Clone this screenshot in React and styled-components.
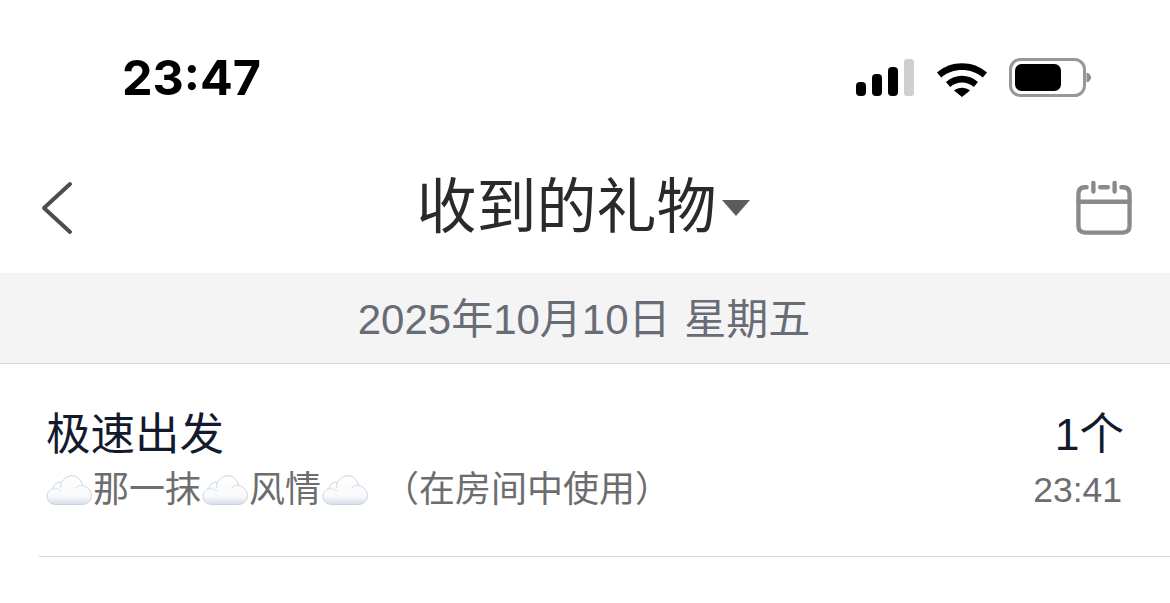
import React from 'react';
import styled, { createGlobalStyle } from 'styled-components';

const FONT = '"Liberation Sans", "Noto Sans CJK SC", sans-serif';

const GlobalStyle = createGlobalStyle`
  html, body {
    margin: 0;
    padding: 0;
    background: #fff;
    overflow: hidden;
  }
  body {
    font-family: ${FONT};
  }
`;

const Cloud = () => (
  <CloudIcon viewBox="0 0 46 30">
    <defs>
      <linearGradient id="cloudFill" x1="0" y1="0" x2="0" y2="1">
        <stop offset="0" stopColor="#ffffff" />
        <stop offset="0.72" stopColor="#f8f9fb" />
        <stop offset="1" stopColor="#d5deeb" />
      </linearGradient>
    </defs>
    <path
      d="M10 29.500C4.500 29.500 1 26 1 21.500 1 17.500 3.500 14.500 7 13.500 7.500 9 11.500 6.500 15.500 7.500 18 3 22 .8 26 .8c5.500 0 9.500 4.200 10.500 9.700 5 1 9 5 9 10 0 5-4 9-9.500 9z"
      fill="url(#cloudFill)"
      stroke="#ccd3de"
      strokeWidth="1"
    />
    <path d="M7 14c3-1 6-.2 8 2M15.500 7.500c-1 2-1.200 3.500-1 5.500M36.500 10.500c-2.500-.3-5 .6-6.500 2.500" fill="none" stroke="#dde2ea" strokeWidth="1.200" />
  </CloudIcon>
);

export default function App() {
  return (
    <Page>
      <GlobalStyle />
      <StatusBar>
        <Clock>23:47</Clock>
        <StatusIcons>
          <svg width="58" height="38" viewBox="0 0 58 38">
            <rect x="0" y="23" width="10" height="14" rx="4" fill="#000" />
            <rect x="16" y="15" width="10" height="22" rx="4" fill="#000" />
            <rect x="32" y="8" width="10" height="29" rx="4" fill="#000" />
            <rect x="48" y="0" width="10" height="37" rx="3" fill="#cfcfcf" />
          </svg>
          <svg width="52" height="38" viewBox="0 0 52 38">
            <path d="M1 13.500C14.500 1 37.500 1 51 13.500l-4.200 5C35.500 8.500 16.500 8.500 5.200 18.500z" fill="#000" />
            <path d="M10 23C19.500 14.500 32.500 14.500 42 23l-4.200 5c-6.500-6-17.100-6-23.600 0z" fill="#000" />
            <path d="M18 31.500c4.800-3.700 11.200-3.700 16 0L26 38z" fill="#000" />
          </svg>
          <svg width="82" height="40" viewBox="0 0 82 40">
            <rect x="1.500" y="1.500" width="74" height="36" rx="10" fill="none" stroke="#979797" strokeWidth="3" />
            <rect x="6" y="6" width="46" height="27" rx="6.500" fill="#000" />
            <path d="M77.500 14.500c3 .8 4.500 3 4.500 5s-1.500 4.200-4.500 5z" fill="#8e8e8e" />
          </svg>
        </StatusIcons>
      </StatusBar>

      <NavBar>
        <svg width="32" height="54" viewBox="0 0 32 54">
          <path d="M29 3L3 27l26 24" fill="none" stroke="#4d4d4d" strokeWidth="4" strokeLinecap="round" strokeLinejoin="round" />
        </svg>
        <TitleWrap>
          <Title>收到的礼物</Title>
          <svg width="28" height="16" viewBox="0 0 28 16">
            <path d="M0 0h28L14 16z" fill="#5c5c5c" />
          </svg>
        </TitleWrap>
        <svg width="58" height="54" viewBox="0 0 58 56">
          <g fill="none" stroke="#8a8a8a" strokeWidth="4.500" strokeLinecap="round">
            <path d="M11 6.500H9.500C5 6.500 2.500 9 2.500 13.500v33c0 4.500 2.500 7 7 7h39c4.500 0 7-2.500 7-7v-33c0-4.500-2.500-7-7-7H47" />
            <path d="M2.500 21.500h53" />
            <path d="M18 2v9M40 2v9M25 6.500h8" />
          </g>
        </svg>
      </NavBar>

      <DateBar>2025年10月10日 星期五</DateBar>

      <Row>
        <RowLeft>
          <GiftName>极速出发</GiftName>
          <Sender>
            <Cloud />
            <span>那一抹</span>
            <Cloud />
            <span>风情</span>
            <Cloud />
            <Usage>（在房间中使用）</Usage>
          </Sender>
        </RowLeft>
        <RowRight>
          <Count>1个</Count>
          <Time>23:41</Time>
        </RowRight>
      </Row>
    </Page>
  );
}

const Page = styled.div`
  width: 1170px;
  height: 603px;
  background: #fff;
  overflow: hidden;
`;

const StatusBar = styled.div`
  height: 154px;
  box-sizing: border-box;
  padding: 2px 79px 0 122px;
  display: flex;
  justify-content: space-between;
  align-items: center;
`;

const Clock = styled.div`
  font-family: Inter, ${FONT};
  font-size: 48.500px;
  font-weight: 700;
  color: #000;
  margin-bottom: 2px;
`;

const StatusIcons = styled.div`
  display: flex;
  align-items: center;
  gap: 21.500px;
`;

const NavBar = styled.div`
  height: 119px;
  box-sizing: border-box;
  padding: 0 37px 12px 41px;
  display: flex;
  justify-content: space-between;
  align-items: center;
`;

const TitleWrap = styled.div`
  display: flex;
  align-items: center;
  gap: 5px;
  margin-left: 18px;
`;

const Title = styled.div`
  font-size: 60px;
  font-weight: 400;
  color: #2a2a2a;
  line-height: 70px;
`;

const CloudIcon = styled.svg`
  width: 46px;
  height: 30px;
  flex: none;
`;

const DateBar = styled.div`
  height: 91px;
  box-sizing: border-box;
  background: #f4f4f5;
  border-bottom: 1px solid #d6d6d6;
  display: flex;
  align-items: center;
  justify-content: center;
  font-size: 42px;
  word-spacing: 2px;
  color: #686c75;
  padding: 0 2px 5px 0;
`;

const Row = styled.div`
  height: 193px;
  box-sizing: border-box;
  margin-left: 39px;
  padding: 41px 48px 0 7px;
  border-bottom: 1px solid #d6d6d6;
  display: flex;
  justify-content: space-between;
`;

const RowLeft = styled.div`
  display: flex;
  flex-direction: column;
`;

const GiftName = styled.div`
  font-size: 44.500px;
  line-height: 60px;
  color: #141a2e;
`;

const Sender = styled.div`
  display: flex;
  align-items: center;
  gap: 1px;
  font-size: 36px;
  line-height: 50px;
  color: #6d6d6f;
`;

const Usage = styled.span`
  margin-left: 14px;
`;

const RowRight = styled.div`
  display: flex;
  flex-direction: column;
  align-items: flex-end;
`;

const Count = styled.div`
  font-size: 44.500px;
  line-height: 60px;
  color: #141a2e;
  margin-right: -2px;
`;

const Time = styled.div`
  font-size: 35.500px;
  line-height: 50px;
  color: #6d6d6f;
`;
